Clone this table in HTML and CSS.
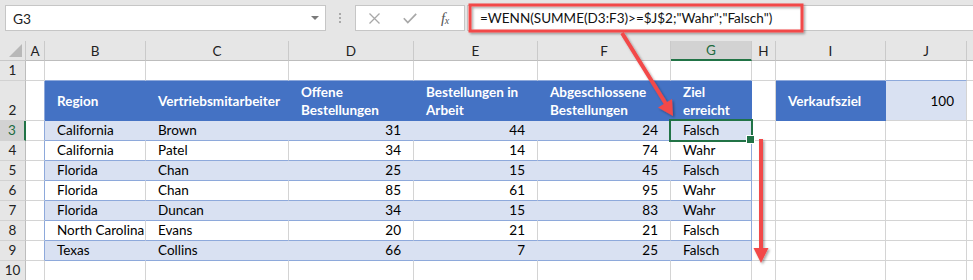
FILE: index.html
```html
<!DOCTYPE html>
<html lang="de">
<head>
<meta charset="utf-8">
<title>Excel</title>
<link rel="stylesheet" href="styles.css">
</head>
<body>
<div class="app">
  <div class="toolbar">
    <div class="namebox">
      <span>G3</span>
      <svg class="nb-arrow" width="8" height="4" viewBox="0 0 8 4"><path d="M0 0H8L4 4Z" fill="#7a7a7a"/></svg>
    </div>
    <div class="grip"><i></i><i></i><i></i></div>
    <div class="fbtns">
      <svg class="ic-x" width="11" height="11" viewBox="0 0 11 11"><path d="M0.5 0.5L10.5 10.5M10.5 0.5L0.5 10.5" stroke="#a8a8a8" stroke-width="1.3" fill="none"/></svg>
      <svg class="ic-ok" width="14" height="11" viewBox="0 0 14 11"><path d="M0.8 5.2L4.8 9.6L13.2 0.8" stroke="#a8a8a8" stroke-width="1.7" fill="none"/></svg>
      <span class="fx">f<span class="fx-x">x</span></span>
    </div>
    <div class="formula">=WENN(SUMME(D3:F3)&gt;=$J$2;"Wahr";"Falsch")</div>
  </div>

  <div class="sheet">
    <div class="corner"><svg width="13" height="13" viewBox="0 0 13 13"><path d="M13 0V13H0Z" fill="#b8b8b8"/></svg></div>
    <div class="ch">A</div><div class="ch">B</div><div class="ch">C</div><div class="ch">D</div><div class="ch">E</div><div class="ch">F</div><div class="ch chs">G</div><div class="ch">H</div><div class="ch">I</div><div class="ch">J</div><div class="ch"></div>

    <div class="rh">1</div>
    <div class="c"></div><div class="c tt"></div><div class="c tt"></div><div class="c tt"></div><div class="c tt"></div><div class="c tt"></div><div class="c tt"></div><div class="c"></div><div class="c tt"></div><div class="c tt"></div><div class="c"></div>

    <div class="rh">2</div>
    <div class="c edge"></div>
    <div class="h">Region</div>
    <div class="h">Vertriebsmitarbeiter</div>
    <div class="h">Offene<br>Bestellungen</div>
    <div class="h">Bestellungen in<br>Arbeit</div>
    <div class="h">Abgeschlossene<br>Bestellungen</div>
    <div class="h">Ziel<br>erreicht</div>
    <div class="c"></div>
    <div class="h">Verkaufsziel</div>
    <div class="goal num">100</div>
    <div class="c"></div>

    <div class="rh rhs">3</div>
    <div class="c edge"></div>
    <div class="b">California</div><div class="b">Brown</div><div class="b num">31</div><div class="b num">44</div><div class="b num">24</div><div class="b last sel">Falsch</div>
    <div class="c"></div><div class="c"></div><div class="c"></div><div class="c"></div>

    <div class="rh">4</div>
    <div class="c edge"></div>
    <div class="w">California</div><div class="w">Patel</div><div class="w num">34</div><div class="w num">14</div><div class="w num">74</div><div class="w last">Wahr</div>
    <div class="c"></div><div class="c"></div><div class="c"></div><div class="c"></div>

    <div class="rh">5</div>
    <div class="c edge"></div>
    <div class="b">Florida</div><div class="b">Chan</div><div class="b num">25</div><div class="b num">15</div><div class="b num">45</div><div class="b last">Falsch</div>
    <div class="c"></div><div class="c"></div><div class="c"></div><div class="c"></div>

    <div class="rh">6</div>
    <div class="c edge"></div>
    <div class="w">Florida</div><div class="w">Chan</div><div class="w num">85</div><div class="w num">61</div><div class="w num">95</div><div class="w last">Wahr</div>
    <div class="c"></div><div class="c"></div><div class="c"></div><div class="c"></div>

    <div class="rh">7</div>
    <div class="c edge"></div>
    <div class="b">Florida</div><div class="b">Duncan</div><div class="b num">34</div><div class="b num">15</div><div class="b num">83</div><div class="b last">Wahr</div>
    <div class="c"></div><div class="c"></div><div class="c"></div><div class="c"></div>

    <div class="rh">8</div>
    <div class="c edge"></div>
    <div class="w">North Carolina</div><div class="w">Evans</div><div class="w num">20</div><div class="w num">21</div><div class="w num">21</div><div class="w last">Falsch</div>
    <div class="c"></div><div class="c"></div><div class="c"></div><div class="c"></div>

    <div class="rh">9</div>
    <div class="c edge"></div>
    <div class="b">Texas</div><div class="b">Collins</div><div class="b num">66</div><div class="b num">7</div><div class="b num">25</div><div class="b last">Falsch</div>
    <div class="c"></div><div class="c"></div><div class="c"></div><div class="c"></div>

    <div class="rh">10</div>
    <div class="c"></div><div class="c"></div><div class="c"></div><div class="c"></div><div class="c"></div><div class="c"></div><div class="c"></div><div class="c"></div><div class="c"></div><div class="c"></div><div class="c"></div>
  </div>

  <svg class="annot" width="973" height="280" viewBox="0 0 973 280">
    <defs>
      <filter id="sh" x="-20%" y="-20%" width="140%" height="140%">
        <feDropShadow dx="1.5" dy="1.5" stdDeviation="1.3" flood-color="#000" flood-opacity="0.35"/>
      </filter>
    </defs>
    <g filter="url(#sh)">
      <rect x="470" y="5" width="332" height="26" fill="none" stroke="#f24848" stroke-width="3"/>
      <line x1="622" y1="33" x2="666" y2="104" stroke="#f24848" stroke-width="4"/>
      <polygon points="673,116 672,99 658,107.4" fill="#f24848"/>
      <line x1="761" y1="139" x2="761" y2="249" stroke="#f24848" stroke-width="4"/>
      <polygon points="753.5,248 768.5,248 761,263" fill="#f24848"/>
    </g>
  </svg>
</div>
</body>
</html>
```

FILE: styles.css
```css
* {
  box-sizing: border-box;
  margin: 0;
  padding: 0;
}

body {
  margin: 0;
  background: #fff;
  font-family: Lato, "Liberation Sans", sans-serif;
  overflow: hidden;
}

.app {
  position: relative;
  width: 973px;
  height: 280px;
  background: #e6e6e6;
  overflow: hidden;
}

/* ---------- formula bar ---------- */
.toolbar {
  display: flex;
  align-items: flex-start;
  height: 41px;
  padding: 5px 0 0 5px;
}

.namebox {
  width: 321px;
  height: 26px;
  background: #fff;
  border: 1px solid #c6c6c6;
  display: flex;
  align-items: center;
  justify-content: space-between;
  padding: 0 6px 0 7px;
  font-size: 13.8px;
  color: #222;
}

.grip {
  margin-left: 13px;
  margin-top: 8px;
  display: flex;
  flex-direction: column;
  gap: 2px;
}

.grip i {
  display: block;
  width: 2px;
  height: 2px;
  background: #a9a9a9;
}

.fbtns {
  margin-left: 14px;
  width: 110px;
  height: 26px;
  background: #fff;
  border: 1px solid #c6c6c6;
  display: flex;
  align-items: center;
  padding-left: 13px;
}

.ic-ok {
  margin-left: 23px;
}

.fx {
  margin-left: 24px;
  font-family: "Liberation Serif", serif;
  font-style: italic;
  font-size: 15px;
  color: #555;
  letter-spacing: -0.5px;
}

.fx-x {
  font-size: 10px;
  position: relative;
  top: 1px;
}

.formula {
  flex: 1;
  margin-left: 2px;
  height: 26px;
  background: #fff;
  border: 1px solid #c6c6c6;
  border-right: none;
  padding-left: 12px;
  font-size: 13.5px;
  line-height: 24px;
  color: #111;
  white-space: nowrap;
}

/* ---------- sheet grid ---------- */
.sheet {
  display: grid;
  grid-template-columns: 26px 19px 101px 143px 125px 124px 133px 81px 24px 110px 81px 1fr;
  grid-template-rows: 20px 20px 40px repeat(7, 20px) 20px;
  font-size: 13.5px;
  color: #000;
}

.corner {
  background: #e6e6e6;
  border-right: 1px solid #c8c8c8;
  border-bottom: 1px solid #c8c8c8;
  display: flex;
  align-items: flex-end;
  justify-content: flex-end;
  padding: 0 3px 3px 0;
}

.ch {
  background: #e6e6e6;
  border-right: 1px solid #cacaca;
  border-bottom: 1px solid #bdbdbd;
  display: flex;
  align-items: center;
  justify-content: center;
  color: #222;
  font-size: 13.5px;
}

.chs {
  background: #d2d2d2;
  border-bottom: 2px solid #217346;
  color: #1e6b40;
}

.rh {
  background: #e6e6e6;
  border-right: 1px solid #bdbdbd;
  border-bottom: 1px solid #d2d2d2;
  display: flex;
  align-items: flex-end;
  justify-content: center;
  line-height: 18px;
  padding-bottom: 1px;
  color: #222;
  font-size: 13.5px;
}

.rhs {
  background: #d2d2d2;
  border-right: 2px solid #217346;
  color: #1e6b40;
}

.c,
.b,
.w,
.h,
.goal {
  background: #fff;
  border-right: 1px solid #d4d4d4;
  border-bottom: 1px solid #d4d4d4;
  display: flex;
  align-items: flex-end;
  padding: 0 0 1px 12px;
  line-height: 18px;
  white-space: nowrap;
  overflow: hidden;
}

.tt {
  border-bottom-color: #8ea9db;
}

.edge {
  border-right-color: #8ea9db;
}

.h {
  background: #4472c4;
  border-right-color: #4472c4;
  border-bottom-color: #4472c4;
  color: #fff;
  font-weight: 700;
  align-items: center;
  padding-top: 2px;
}

.b {
  background: #d9e1f2;
  border-right-color: #d9e1f2;
  border-bottom-color: #8ea9db;
}

.w {
  border-bottom-color: #8ea9db;
}

.last {
  border-right-color: #8ea9db;
}

.goal {
  background: #d9e1f2;
  border-right-color: #d4d4d4;
  align-items: center;
  padding-top: 2px;
}

.num {
  justify-content: flex-end;
  padding-left: 0;
  padding-right: 12px;
}

.sel {
  position: relative;
  overflow: visible;
}

.sel::before {
  content: "";
  position: absolute;
  inset: -2px;
  border: 2px solid #217346;
}

.sel::after {
  content: "";
  position: absolute;
  right: -4px;
  bottom: -4px;
  width: 7px;
  height: 7px;
  background: #217346;
  border: 1px solid #fff;
}

/* ---------- annotations ---------- */
.annot {
  position: absolute;
  left: 0;
  top: 0;
  pointer-events: none;
}
```
